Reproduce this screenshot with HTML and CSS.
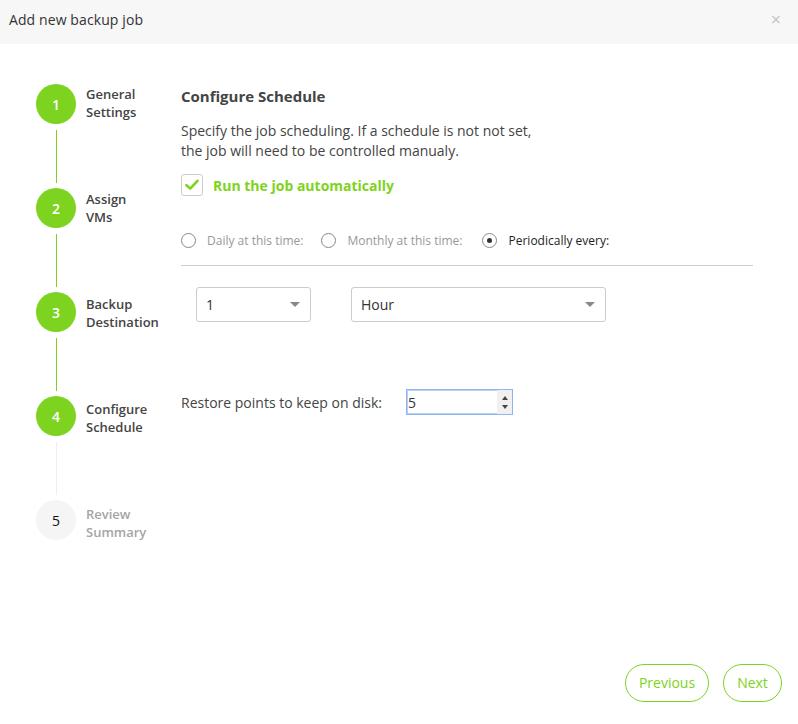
FILE: index.html
```html
<!DOCTYPE html>
<html>
<head>
<meta charset="utf-8">
<link rel="stylesheet" href="styles.css">
</head>
<body>
<div class="modal">
  <div class="header">
    <span class="title">Add new backup job</span>
    <span class="close">×</span>
  </div>
  <div class="main">
    <div class="steps">
      <div class="step done">
        <div class="marker"><div class="circle">1</div><div class="line"></div></div>
        <div class="label">General<br>Settings</div>
      </div>
      <div class="step done">
        <div class="marker"><div class="circle">2</div><div class="line"></div></div>
        <div class="label">Assign<br>VMs</div>
      </div>
      <div class="step done">
        <div class="marker"><div class="circle">3</div><div class="line"></div></div>
        <div class="label">Backup<br>Destination</div>
      </div>
      <div class="step done">
        <div class="marker"><div class="circle">4</div><div class="line grey"></div></div>
        <div class="label">Configure<br>Schedule</div>
      </div>
      <div class="step todo">
        <div class="marker"><div class="circle">5</div></div>
        <div class="label">Review<br>Summary</div>
      </div>
    </div>
    <div class="content">
      <h2 class="heading">Configure Schedule</h2>
      <p class="desc">Specify the job scheduling. If a schedule is not not set,<br>the job will need to be controlled manualy.</p>
      <div class="check-row">
        <span class="checkbox">
          <svg width="14" height="12" viewBox="0 0 14 12"><path d="M1.5 6.2 L5.2 9.6 L12.5 1.8" fill="none" stroke="#7ed321" stroke-width="2.6" stroke-linecap="round" stroke-linejoin="round"/></svg>
        </span>
        <span class="check-label">Run the job automatically</span>
      </div>
      <div class="radios">
        <span class="radio-item"><span class="radio"></span><span class="radio-label">Daily at this time:</span></span>
        <span class="radio-item"><span class="radio"></span><span class="radio-label">Monthly at this time:</span></span>
        <span class="radio-item active"><span class="radio"><span class="dot"></span></span><span class="radio-label">Periodically every:</span></span>
      </div>
      <div class="divider"></div>
      <div class="selects">
        <div class="select small"><span>1</span><span class="caret"></span></div>
        <div class="select wide"><span>Hour</span><span class="caret"></span></div>
      </div>
      <div class="restore">
        <span class="restore-label">Restore points to keep on disk:</span>
        <div class="number">
          <span class="num-val">5</span>
          <span class="spin"><span class="up"></span><span class="down"></span></span>
        </div>
      </div>
    </div>
  </div>
  <div class="footer">
    <button class="btn prev">Previous</button>
    <button class="btn next">Next</button>
  </div>
</div>
</body>
</html>
```

FILE: styles.css
```css
* { box-sizing: border-box; }
html, body { margin: 0; padding: 0; background: #fff; }
body { font-family: "Open Sans", "DejaVu Sans", sans-serif; color: #333; }

.modal { width: 798px; height: 724px; display: flex; flex-direction: column; }

.header {
  height: 44px;
  background: #f7f7f7;
  display: flex;
  align-items: center;
  justify-content: space-between;
  padding: 0 17px 0 9px;
  flex-shrink: 0;
}
.title { font-size: 14px; color: #333; letter-spacing: 0.1px; position: relative; top: -3px; }
.close { font-size: 18px; color: #c4c4c4; position: relative; top: -3px; }

.main { display: flex; padding-top: 40px; }

.steps { width: 181px; padding-left: 36px; flex-shrink: 0; }
.step { display: flex; }
.marker { width: 40px; display: flex; flex-direction: column; align-items: center; }
.circle {
  width: 40px; height: 40px; border-radius: 50%;
  display: flex; align-items: center; justify-content: center;
  font-size: 14px; font-weight: 600;
}
.done .circle { background: #7ed321; color: #fff; }
.todo .circle { background: #f5f5f5; color: #111; font-weight: 400; }
.line { width: 1px; height: 53px; margin: 6px 0 5px; background: #7ed321; }
.line.grey { background: #eeeeee; }
.label {
  margin-left: 10px; margin-top: 1px;
  font-size: 13px; line-height: 18px; font-weight: 600; color: #444;
}
.step:nth-child(2) .label { margin-top: 2px; }
.step:nth-child(3) .label { margin-top: 3px; }
.step:nth-child(4) .label { margin-top: 4px; }
.step:nth-child(5) .label { margin-top: 5px; }
.todo .label { color: #a5a5a5; }

.content { width: 572px; }
.heading { margin: 2px 0 0; font-size: 15px; line-height: 20px; font-weight: 700; color: #444; }
.desc { margin: 15px 0 0; font-size: 14px; line-height: 20px; color: #444; }

.check-row { display: flex; align-items: center; margin-top: 13px; height: 22px; }
.checkbox {
  width: 22px; height: 22px; border: 1px solid #ccc; border-radius: 3px;
  display: flex; align-items: center; justify-content: center;
}
.check-label { margin-left: 10px; font-size: 14px; font-weight: 700; color: #7ed321; }

.radios { display: flex; align-items: center; height: 20px; margin-top: 34px; }
.radio-item { display: flex; align-items: center; margin-right: 18px; }
.radio-item:nth-child(2) { margin-right: 20px; }
.radio {
  width: 15px; height: 15px; border: 1px solid #888; border-radius: 50%;
  display: flex; align-items: center; justify-content: center; background: #fff;
}
.dot { width: 5px; height: 5px; border-radius: 50%; background: #333; }
.radio-label { margin-left: 11px; font-size: 12px; color: #999; }
.active .radio-label { color: #222; }

.divider { height: 1px; background: #cfcfcf; margin-top: 15px; }

.selects { display: flex; margin: 21px 0 0 15px; gap: 40px; }
.select {
  height: 35px; border: 1px solid #ccc; border-radius: 3px;
  display: flex; align-items: center; justify-content: space-between;
  padding: 0 10px 1px 9px; font-size: 14px; color: #333;
}
.select.small { width: 115px; }
.select.wide { width: 255px; }
.caret {
  width: 0; height: 0;
  border-left: 5px solid transparent; border-right: 5px solid transparent;
  border-top: 5px solid #888;
}

.restore { display: flex; align-items: center; margin-top: 67px; }
.restore-label { font-size: 14px; color: #444; width: 225px; }
.number {
  width: 107px; height: 26px; border: 1px solid #8fb4f0;
  box-shadow: 0 0 0 1px #b9d0f5 inset;
  display: flex; align-items: center; justify-content: space-between;
  padding-left: 1px;
}
.num-val { font-size: 14px; color: #333; }
.spin {
  width: 15px; height: 100%; background: #f0f0f0;
  display: flex; flex-direction: column; align-items: center; justify-content: center; gap: 5px;
}
.up { width: 0; height: 0; border-left: 3.5px solid transparent; border-right: 3.5px solid transparent; border-bottom: 4px solid #444; }
.down { width: 0; height: 0; border-left: 3.5px solid transparent; border-right: 3.5px solid transparent; border-top: 4px solid #444; }

.footer { margin-top: auto; display: flex; justify-content: flex-end; gap: 14px; padding: 0 16px 22px 0; }
.btn {
  height: 38px; border: 1px solid #7ed321; border-radius: 19px; background: #fff;
  color: #7ed321; font-family: "Open Sans", sans-serif; font-size: 14px;
  padding: 0 0 2px; cursor: pointer;
}
.prev { width: 84px; }
.next { width: 59px; }
```
